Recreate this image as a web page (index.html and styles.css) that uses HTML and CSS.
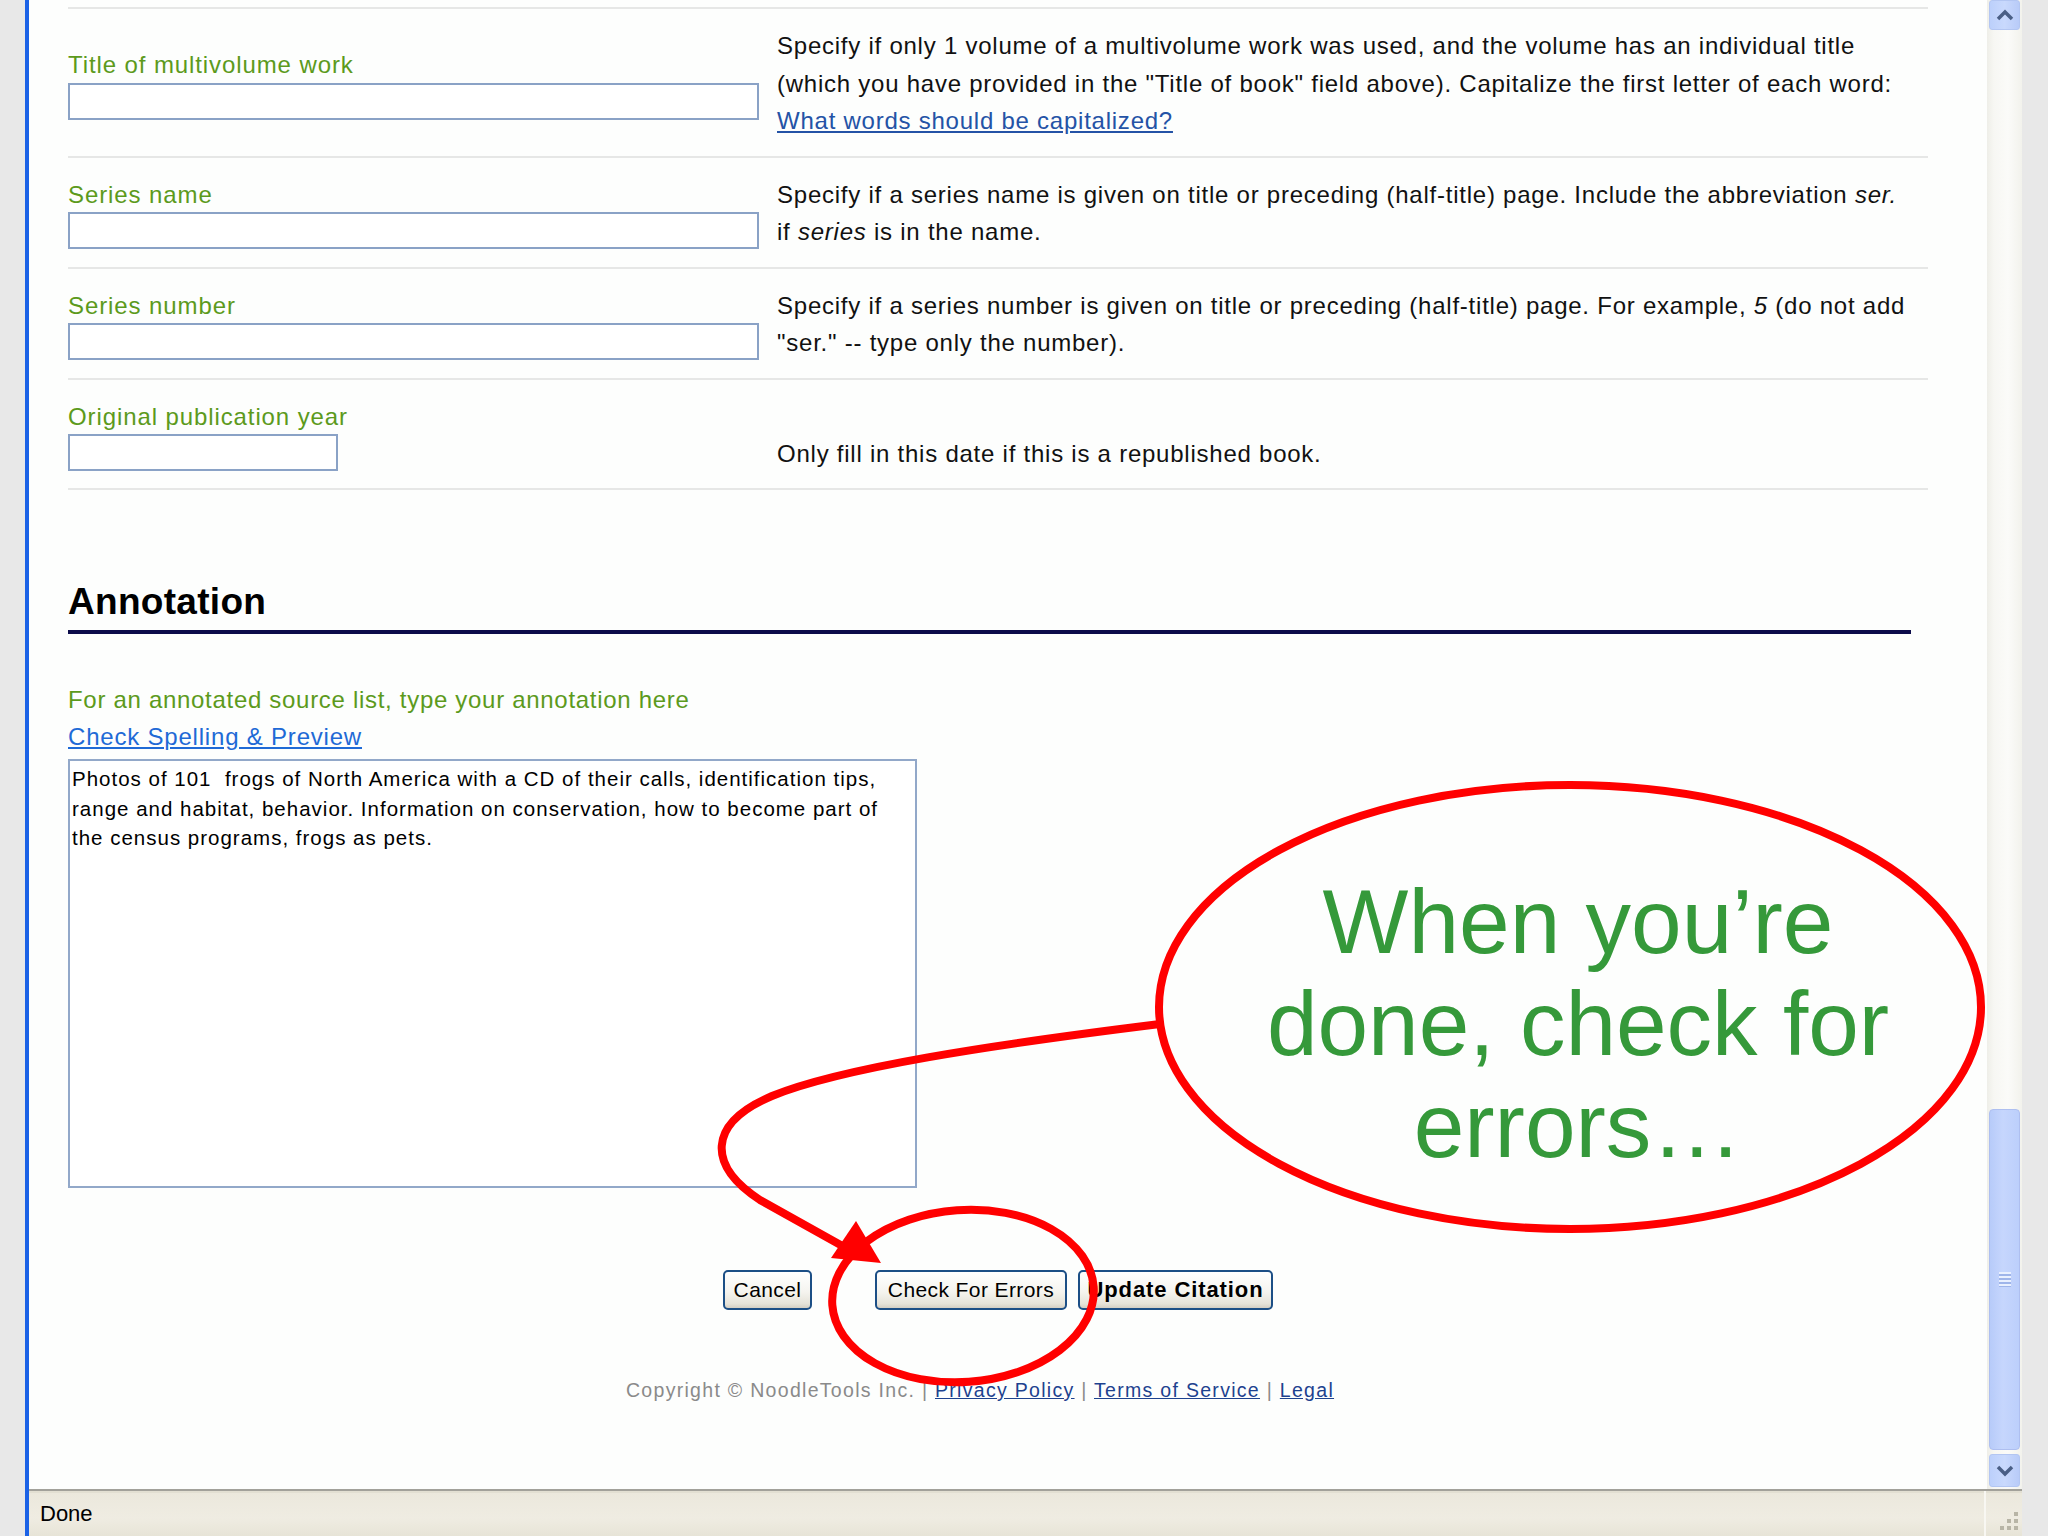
FILE: index.html
```html
<!DOCTYPE html>
<html lang="en">
<head>
<meta charset="utf-8">
<title>Edit Citation - Annotation</title>
<link rel="stylesheet" href="styles.css">
</head>
<body>
<div class="window">
  <div class="frame-left"></div>
  <div class="frame-blue"></div>
  <div class="main">
    <div class="viewport">
      <div class="page">
        <div class="rows">
          <div class="row">
            <div class="field">
              <div class="label">Title of multivolume work</div>
              <input class="input" type="text">
            </div>
            <div class="help">Specify if only 1 volume of a multivolume work was used, and the volume has an individual title<br>(which you have provided in the "Title of book" field above). Capitalize the first letter of each word:<br><a class="help-link" href="#">What words should be capitalized?</a></div>
          </div>
          <div class="row">
            <div class="field">
              <div class="label">Series name</div>
              <input class="input" type="text">
            </div>
            <div class="help">Specify if a series name is given on title or preceding (half-title) page. Include the abbreviation <i>ser.</i><br>if <i>series</i> is in the name.</div>
          </div>
          <div class="row">
            <div class="field">
              <div class="label">Series number</div>
              <input class="input" type="text">
            </div>
            <div class="help">Specify if a series number is given on title or preceding (half-title) page. For example, <i>5</i> (do not add<br>"ser." -- type only the number).</div>
          </div>
          <div class="row last">
            <div class="field">
              <div class="label">Original publication year</div>
              <input class="input input-short" type="text">
            </div>
            <div class="help">Only fill in this date if this is a republished book.</div>
          </div>
        </div>

        <h2 class="annot-head">Annotation</h2>
        <div class="label annot-label">For an annotated source list, type your annotation here</div>
        <a class="spell-link" href="#">Check Spelling &amp; Preview</a>
        <textarea class="annot-box" wrap="off" readonly>Photos of 101  frogs of North America with a CD of their calls, identification tips,
range and habitat, behavior. Information on conservation, how to become part of
the census programs, frogs as pets.</textarea>

        <div class="buttons">
          <button class="btn btn-cancel" type="button">Cancel</button>
          <button class="btn btn-check" type="button">Check For Errors</button>
          <button class="btn btn-update" type="button">Update Citation</button>
        </div>

        <div class="footer">Copyright © NoodleTools Inc. | <a href="#">Privacy Policy</a> | <a href="#">Terms of Service</a> | <a href="#">Legal</a></div>
      </div>
      <div class="scrollbar">
        <div class="sb-btn">
          <svg width="20" height="12" viewBox="0 0 20 12"><polyline points="3,10 10,3 17,10" fill="none" stroke="#4a5f86" stroke-width="3.5"/></svg>
        </div>
        <div class="sb-track">
          <div class="sb-thumb"><div class="sb-grip-lines"></div></div>
        </div>
        <div class="sb-btn sb-btn-down">
          <svg width="20" height="12" viewBox="0 0 20 12"><polyline points="3,2 10,9 17,2" fill="none" stroke="#4a5f86" stroke-width="3.5"/></svg>
        </div>
      </div>
    </div>
    <div class="statusbar">
      <span class="status-text">Done</span>
      <div class="status-grip">
        <svg width="34" height="30" viewBox="0 0 34 30">
          <g fill="#b8b5a6">
            <rect x="26" y="6" width="4" height="4"/>
            <rect x="19" y="13" width="4" height="4"/><rect x="26" y="13" width="4" height="4"/>
            <rect x="12" y="20" width="4" height="4"/><rect x="19" y="20" width="4" height="4"/><rect x="26" y="20" width="4" height="4"/>
          </g>
        </svg>
      </div>
    </div>
  </div>
  <div class="frame-right"></div>
</div>

<svg class="overlay" viewBox="0 0 2048 1536" width="2048" height="1536">
  <ellipse cx="1570" cy="1007" rx="411" ry="222" fill="none" stroke="#ff0000" stroke-width="8"/>
  <path d="M1160 1024 C 990 1045 840 1068 772 1096 C 706 1124 708 1166 760 1200 L 846 1248" fill="none" stroke="#ff0000" stroke-width="8" stroke-linecap="round"/>
  <polygon points="856,1221 831,1258 881,1263" fill="#ff0000"/>
  <ellipse cx="963" cy="1296" rx="131" ry="86" fill="none" stroke="#ff0000" stroke-width="8" transform="rotate(-4 963 1296)"/>
</svg>
<div class="callout-text">When you’re<br>done, check for<br>errors…</div>
</body>
</html>
```

FILE: styles.css
```css
html, body {
  margin: 0;
  padding: 0;
}

body {
  width: 2048px;
  height: 1536px;
  overflow: hidden;
  position: relative;
  font-family: "Liberation Sans", Arial, sans-serif;
  color: #000;
  background: #e9e9e9;
}

.window {
  display: flex;
  width: 2048px;
  height: 1536px;
}

.frame-left {
  width: 25px;
  background: #e8e8e8;
}

.frame-blue {
  width: 4px;
  background: #1b62e6;
}

.frame-right {
  width: 26px;
  background: #e8e8e8;
}

.main {
  flex: 1;
  display: flex;
  flex-direction: column;
  min-width: 0;
}

.viewport {
  flex: 1;
  display: flex;
  min-height: 0;
}

/* ---------- page ---------- */
.page {
  flex: 1;
  background: #fdfefd;
  padding: 7px 59px 0 39px;
  min-width: 0;
}

.rows {
  display: flex;
  flex-direction: column;
}

.row {
  display: flex;
  border-top: 2px solid #e6e7e6;
  padding: 17px 0;
}

.row.last {
  border-bottom: 2px solid #e6e7e6;
}

.field {
  width: 709px;
  flex: none;
  align-self: center;
  display: flex;
  flex-direction: column;
}

.label {
  font-size: 24px;
  line-height: 37.5px;
  padding-top: 1px;
  margin-bottom: -1px;
  letter-spacing: 0.9px;
  color: #5c9a1c;
  white-space: nowrap;
}

.input {
  box-sizing: border-box;
  width: 691px;
  height: 37px;
  margin: 0;
  border: 2px solid #8aa2c6;
  background: #ffffff;
  padding: 0 4px;
  font-family: inherit;
  font-size: 21px;
}

.input-short {
  width: 270px;
}

.help {
  align-self: flex-end;
  font-size: 24px;
  line-height: 37.5px;
  padding-top: 1px;
  margin-bottom: -1px;
  letter-spacing: 0.76px;
  white-space: nowrap;
  color: #111;
}

.help i {
  font-style: italic;
}

.help-link {
  color: #2453a6;
  text-decoration: underline;
}

/* ---------- annotation ---------- */
.annot-head {
  margin: 89px 17px 0 0;
  font-size: 37px;
  line-height: 46px;
  font-weight: bold;
  letter-spacing: 0.3px;
  padding-bottom: 5px;
  border-bottom: 4px solid #0c0c4a;
  color: #000;
}

.annot-label {
  margin-top: 46px;
  letter-spacing: 0.7px;
}

.spell-link {
  display: block;
  width: max-content;
  font-size: 24px;
  line-height: 37.5px;
  letter-spacing: 0.8px;
  color: #1f6ad6;
  text-decoration: underline;
}

.annot-box {
  display: block;
  box-sizing: border-box;
  width: 849px;
  height: 429px;
  margin: 4px 0 0 0;
  padding: 3px 3px 2px 2px;
  border: 2px solid #92a8c9;
  background: #ffffff;
  font-family: "Liberation Sans", Arial, sans-serif;
  font-size: 20.5px;
  line-height: 29.5px;
  letter-spacing: 1px;
  color: #000;
  resize: none;
  overflow: hidden;
  white-space: pre;
}

/* ---------- buttons ---------- */
.buttons {
  display: flex;
  justify-content: center;
  margin-top: 82px;
}

.btn {
  box-sizing: border-box;
  height: 40px;
  margin: 0;
  padding: 0;
  border: 2px solid #1c4f86;
  border-radius: 5px;
  background: linear-gradient(#ffffff 0%, #f5f4ef 55%, #e6e3d9 88%, #d4cfc3 100%);
  font-family: "Liberation Sans", Arial, sans-serif;
  font-size: 21px;
  letter-spacing: 0.4px;
  color: #000;
}

.btn-cancel {
  width: 89px;
  margin-right: 63px;
}

.btn-check {
  width: 192px;
  margin-right: 11px;
}

.btn-update {
  width: 195px;
  font-size: 22px;
  letter-spacing: 0.9px;
  font-weight: bold;
}

/* ---------- footer ---------- */
.footer {
  margin-top: 65px;
  padding-right: 36px;
  text-align: center;
  font-size: 19.5px;
  line-height: 30px;
  letter-spacing: 1.3px;
  color: #8a8a8a;
  white-space: nowrap;
}

.footer a {
  color: #1d428f;
  text-decoration: underline;
}

/* ---------- scrollbar ---------- */
.scrollbar {
  width: 35px;
  flex: none;
  display: flex;
  flex-direction: column;
  background: linear-gradient(to right, #eeeee8 0%, #f7f7f3 20%, #fbfbf9 60%, #f2f2ec 100%);
  padding: 0 2px 2px 2px;
  box-sizing: border-box;
}

.sb-btn {
  height: 30px;
  flex: none;
  box-sizing: border-box;
  border: 1px solid #b3c6f2;
  border-radius: 3px;
  background: linear-gradient(to right, #bcd0fb, #c9d9fd 50%, #b8cbf8);
  display: flex;
  align-items: center;
  justify-content: center;
}

.sb-btn-down {
  height: 33px;
  margin-top: 4px;
}

.sb-track {
  flex: 1;
  display: flex;
  flex-direction: column;
  padding-top: 1079px;
}

.sb-thumb {
  height: 341px;
  box-sizing: border-box;
  border: 1px solid #aebff0;
  border-radius: 4px;
  background: linear-gradient(to right, #b7cbf9, #c6d6fd 45%, #bccffb);
  display: flex;
  align-items: center;
  justify-content: center;
}

.sb-grip-lines {
  width: 12px;
  height: 15px;
  background: repeating-linear-gradient(to bottom, #e9f0ff 0, #e9f0ff 2px, #9fb5ea 2px, #9fb5ea 4px);
}

/* ---------- status bar ---------- */
.statusbar {
  height: 47px;
  flex: none;
  box-sizing: border-box;
  display: flex;
  align-items: center;
  border-top: 2px solid #a2a19a;
  box-shadow: inset 0 2px 0 #e2dfd2;
  background: linear-gradient(#ebe8dc 0%, #efece2 60%, #e7e4d7 100%);
}

.status-text {
  flex: 1;
  padding-left: 11px;
  font-family: "Liberation Sans", Arial, sans-serif;
  font-size: 22px;
  color: #000;
}

.status-grip {
  width: 36px;
  align-self: stretch;
  border-left: 2px solid #f8f7f2;
  display: flex;
  align-items: flex-end;
  justify-content: flex-end;
}

/* ---------- callout overlay ---------- */
.overlay {
  position: absolute;
  left: 0;
  top: 0;
  width: 2048px;
  height: 1536px;
  pointer-events: none;
}

.callout-text {
  position: absolute;
  left: 1178px;
  top: 871px;
  width: 800px;
  text-align: center;
  font-family: "Liberation Sans", Arial, sans-serif;
  font-size: 91px;
  line-height: 102px;
  color: #35993a;
  pointer-events: none;
}
```
